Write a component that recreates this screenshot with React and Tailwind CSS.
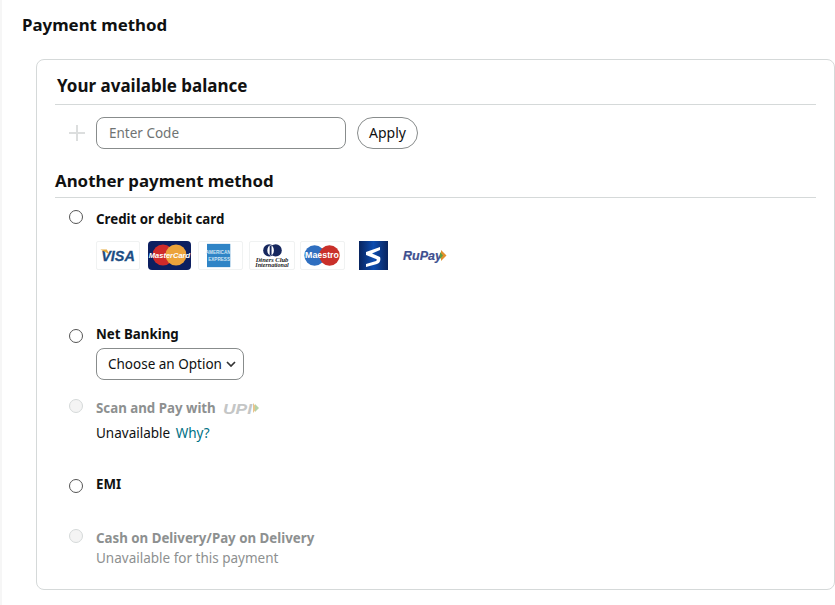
import React from "react";

function Radio({ disabled }) {
  return (
    <span
      className={
        disabled
          ? "block w-[14px] h-[14px] rounded-full border border-[#d5d9d9] bg-[#f4f4f4]"
          : "block w-[14px] h-[14px] rounded-full border border-[#555] bg-white"
      }
    />
  );
}

function LogoBox({ children, className }) {
  return <div className={`h-[29px] rounded-[2px] ${className}`}>{children}</div>;
}

function CardLogos() {
  return (
    <div className="flex items-center mt-[12px]">
      <LogoBox className="w-[44px] border border-[#f0f2f2] bg-white">
        <svg viewBox="0 0 44 29" className="w-full h-full">
          <text x="22" y="20" textAnchor="middle" fontFamily="Liberation Sans" fontWeight="700" fontStyle="italic" fontSize="15.5" fill="#1c4d84" stroke="#1c4d84" strokeWidth="0.3">VISA</text>
          <path d="M3 8h7l2.5 5z" fill="#e5a93a" />
        </svg>
      </LogoBox>
      <LogoBox className="w-[43px] ml-[8px] bg-[#0c1f60] rounded-[4px]">
        <svg viewBox="0 0 43 29" className="w-full h-full">
          <circle cx="15" cy="14" r="10.5" fill="#cf2a2a" />
          <circle cx="28" cy="14" r="10.5" fill="#eca33b" />
          <text x="21.5" y="17" textAnchor="middle" fontFamily="Liberation Sans" fontWeight="700" fontStyle="italic" fontSize="7.5" fill="#fff">MasterCard</text>
        </svg>
      </LogoBox>
      <LogoBox className="w-[45px] ml-[7px] border border-[#f0f2f2] bg-white">
        <svg viewBox="0 0 45 29" className="w-full h-full">
          <rect x="8" y="2" width="25" height="25" fill="#2f84c6" />
          <text x="20" y="13" textAnchor="middle" fontFamily="Liberation Sans" fontWeight="700" fontSize="5" fill="#cfe4f4">AMERICAN</text>
          <text x="21" y="20" textAnchor="middle" fontFamily="Liberation Sans" fontWeight="700" fontSize="5" fill="#cfe4f4">EXPRESS</text>
        </svg>
      </LogoBox>
      <LogoBox className="w-[46px] ml-[6px] border border-[#f0f2f2] bg-white">
        <svg viewBox="0 0 46 29" className="w-full h-full">
          <circle cx="20" cy="9" r="6.5" fill="#16275e" />
          <circle cx="27" cy="9" r="6.5" fill="#16275e" />
          <ellipse cx="21.5" cy="9" rx="3.5" ry="5.5" fill="#fff" />
          <rect x="20.5" y="4" width="2" height="10" fill="#16275e" />
          <text x="23" y="21" textAnchor="middle" fontFamily="Liberation Serif" fontStyle="italic" fontWeight="700" fontSize="7" fill="#222">Diners Club</text>
          <text x="23" y="27" textAnchor="middle" fontFamily="Liberation Serif" fontStyle="italic" fontWeight="700" fontSize="6.5" fill="#222">International</text>
        </svg>
      </LogoBox>
      <LogoBox className="w-[45px] ml-[5px] border border-[#f0f2f2] bg-white">
        <svg viewBox="0 0 45 29" className="w-full h-full">
          <circle cx="14" cy="14.5" r="11" fill="#2f6fc0" />
          <circle cx="30" cy="14.5" r="11" fill="#c9302a" />
          <text x="22" y="17.5" textAnchor="middle" fontFamily="Liberation Sans" fontWeight="700" fontSize="9.5" fill="#fff">Maestro</text>
        </svg>
      </LogoBox>
      <LogoBox className="w-[29px] ml-[14px] rounded-none bg-gradient-to-r from-[#08245f] via-[#0d4db0] to-[#08245f]">
        <svg viewBox="0 0 29 29" className="w-full h-full">
          <path d="M7 11 21 6v3l-8 3.500 8 3.500c1 3 0 6-3 7L7 26v-3l10-3c1-1 1-2 0-2L7 14z" fill="#fff" />
        </svg>
      </LogoBox>
      <div className="w-[45px] h-[29px] ml-[14px] bg-white">
        <svg viewBox="0 0 45 29" className="w-full h-full">
          <text x="1" y="18.500" fontFamily="Liberation Sans" fontWeight="700" fontStyle="italic" fontSize="12.500" fill="#3e4f8f" stroke="#3e4f8f" strokeWidth="0.2">RuPay</text>
          <path d="M39 9l5.500 5.500-5.500 5.500z" fill="#e28f2d" />
          <path d="M38 11l3 3.500-3 3.500z" fill="#5f9e43" />
        </svg>
      </div>
    </div>
  );
}

function UpiLogo() {
  return (
    <svg viewBox="0 0 37 14" className="w-[37px] h-[14px] ml-[7px]">
      <text x="0" y="12.500" fontFamily="Liberation Sans" fontStyle="italic" fontSize="15.500" fill="#c4c6c6" textLength="29" lengthAdjust="spacingAndGlyphs">UPI</text>
      <path d="M30 2l4 5-4 5z" fill="#e9c48c" />
      <path d="M32 3l4 4-4 4z" fill="#b5d2a8" />
    </svg>
  );
}

export default function App() {
  return (
    <div
      className="h-[605px] w-[835px] overflow-hidden bg-white border-l-2 border-[#f6f6f6] text-[#0f1111] text-[13.5px]"
      style={{ fontFamily: '"Noto Sans", sans-serif' }}
    >
      <h1 className="ml-[20px] mt-[14px] text-[16.85px] leading-[22px] font-bold">Payment method</h1>

      <div className="ml-[34px] mt-[23px] h-[531px] border border-[#d5d9d9] rounded-[8px] pl-[18px] pr-[18px]">
        <h2 className="ml-[2px] mt-[14px] text-[17px] leading-[24px] font-bold text-[#111]">Your available balance</h2>
        <div className="border-t border-[#d5d9d9] mt-[6px]" />

        <div className="flex items-center mt-[12px]">
          <svg viewBox="0 0 16 16" className="w-[16px] h-[16px] ml-[14px] text-[#dcdede]">
            <path d="M8 0v16M0 8h16" stroke="currentColor" strokeWidth="2" />
          </svg>
          <div className="ml-[11px] w-[250px] h-[32px] border border-[#888c8c] rounded-[8px] pl-[12px] pt-[1px] flex items-center text-[#6f7373]">
            Enter Code
          </div>
          <button className="ml-[11px] w-[61px] h-[32px] pb-[1px] border border-[#888c8c] rounded-full bg-white text-[14px] text-[#0f1111]">
            Apply
          </button>
        </div>

        <h2 className="mt-[20px] text-[16.85px] leading-[24px] font-bold text-[#111]">Another payment method</h2>
        <div className="border-t border-[#d5d9d9] mt-[4px]" />

        <div className="flex mt-[11px] pl-[14px]">
          <div className="w-[27px] shrink-0 pt-[1px]"><Radio /></div>
          <div>
            <div className="font-bold text-[13.3px] leading-[20px]">Credit or debit card</div>
            <CardLogos />
          </div>
        </div>

        <div className="flex mt-[54px] pl-[14px]">
          <div className="w-[27px] shrink-0 pt-[5px]"><Radio /></div>
          <div>
            <div className="font-bold text-[13.3px] leading-[20px]">Net Banking</div>
            <div className="mt-[4px] w-[148px] h-[32px] border border-[#888c8c] rounded-[8px] flex items-center pl-[11px] text-[13.5px]">
              Choose an Option
              <svg viewBox="0 0 10 6" className="w-[10px] h-[6px] ml-[4px]">
                <path d="M1 1l4 4 4-4" fill="none" stroke="#333" strokeWidth="1.7" />
              </svg>
            </div>
          </div>
        </div>

        <div className="flex mt-[18px] pl-[14px]">
          <div className="w-[27px] shrink-0 pt-[1px]"><Radio disabled /></div>
          <div>
            <div className="flex items-center font-bold text-[13.3px] leading-[20px] text-[#8d9090]">
              Scan and Pay with
              <UpiLogo />
            </div>
            <div className="mt-[5px] leading-[20px]">
              Unavailable <span className="ml-[2px] text-[#007185]">Why?</span>
            </div>
          </div>
        </div>

        <div className="flex mt-[31px] pl-[14px]">
          <div className="w-[27px] shrink-0 pt-[5px]"><Radio /></div>
          <div className="font-bold text-[13.3px] leading-[20px]">EMI</div>
        </div>

        <div className="flex mt-[33px] pl-[14px]">
          <div className="w-[27px] shrink-0 pt-[2px]"><Radio disabled /></div>
          <div className="text-[#8d9090]">
            <div className="font-bold text-[13.3px] leading-[20px] mt-[1px]">Cash on Delivery/Pay on Delivery</div>
            <div className="leading-[20px]">Unavailable for this payment</div>
          </div>
        </div>
      </div>
    </div>
  );
}
